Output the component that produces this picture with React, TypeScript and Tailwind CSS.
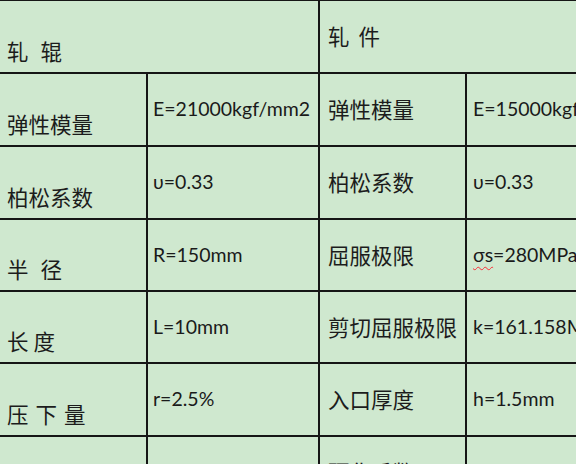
const cjk = "font-['Noto_Sans_CJK_SC',sans-serif] text-[21.5px] leading-none text-[#1c1c1c]";
const lat = "font-['Lato','Open_Sans','Noto_Sans_CJK_SC',sans-serif] text-[19.5px] leading-none text-[#1a1a1a]";
const bg = "bg-[#cfe8cf]";

function Spaced({ chars, gap }: { chars: string[]; gap: string }) {
  return (
    <span className={`flex ${gap}`}>
      {chars.map((c, i) => (
        <span key={i}>{c}</span>
      ))}
    </span>
  );
}

function Label({ children }: { children: React.ReactNode }) {
  // first column: text sits lower in the cell
  return <div className={`${bg} ${cjk} flex items-center pl-[7px] pt-[28px] whitespace-nowrap`}>{children}</div>;
}

function Cell({ children, pad, font }: { children?: React.ReactNode; pad: string; font: string }) {
  return <div className={`${bg} ${font} flex items-center ${pad} pb-[1px] whitespace-nowrap overflow-hidden`}>{children}</div>;
}

export default function App() {
  return (
    <div className={`w-[576px] h-[464px] overflow-hidden ${bg}`}>
      <div className="grid grid-cols-[146px_170px_145px_200px] grid-rows-[71px_71px_71px_70px_70px_71px_71px] gap-[2px] bg-[#161616] pt-[1px] w-[665px]">
        <div className={`col-span-2 ${bg} ${cjk} flex items-center pl-[7px] pt-[28px]`}>
          <Spaced chars={["轧", "辊"]} gap="gap-[12px]" />
        </div>
        <div className={`col-span-2 ${bg} ${cjk} flex items-center pl-[8px] pb-[1px]`}>
          <Spaced chars={["轧", "件"]} gap="gap-[9px]" />
        </div>

        <Label>弹性模量</Label>
        <Cell pad="pl-[5px]" font={lat}>E=21000kgf/mm2</Cell>
        <Cell pad="pl-[8px]" font={cjk}>弹性模量</Cell>
        <Cell pad="pl-[6px]" font={lat}>E=15000kgf/mm2</Cell>

        <Label>柏松系数</Label>
        <Cell pad="pl-[5px]" font={lat}>υ=0.33</Cell>
        <Cell pad="pl-[8px]" font={cjk}>柏松系数</Cell>
        <Cell pad="pl-[6px]" font={lat}>υ=0.33</Cell>

        <Label>
          <Spaced chars={["半", "径"]} gap="gap-[12px]" />
        </Label>
        <Cell pad="pl-[5px]" font={lat}>R=150mm</Cell>
        <Cell pad="pl-[8px]" font={cjk}>屈服极限</Cell>
        <Cell pad="pl-[6px]" font={lat}>
          <span className="underline decoration-wavy decoration-red-500 decoration-1 underline-offset-[4px]">σs</span>=280MPa
        </Cell>

        <Label>
          <Spaced chars={["长", "度"]} gap="gap-[5px]" />
        </Label>
        <Cell pad="pl-[5px]" font={lat}>L=10mm</Cell>
        <Cell pad="pl-[8px]" font={cjk}>剪切屈服极限</Cell>
        <Cell pad="pl-[6px]" font={lat}>k=161.158MPa</Cell>

        <Label>
          <Spaced chars={["压", "下", "量"]} gap="gap-[7px]" />
        </Label>
        <Cell pad="pl-[5px]" font={lat}>r=2.5%</Cell>
        <Cell pad="pl-[8px]" font={cjk}>入口厚度</Cell>
        <Cell pad="pl-[6px]" font={lat}>h=1.5mm</Cell>

        <Label>{""}</Label>
        <Cell pad="pl-[5px]" font={lat} />
        <Cell pad="pl-[8px]" font={cjk}>硬化系数</Cell>
        <Cell pad="pl-[6px]" font={lat} />
      </div>
    </div>
  );
}
